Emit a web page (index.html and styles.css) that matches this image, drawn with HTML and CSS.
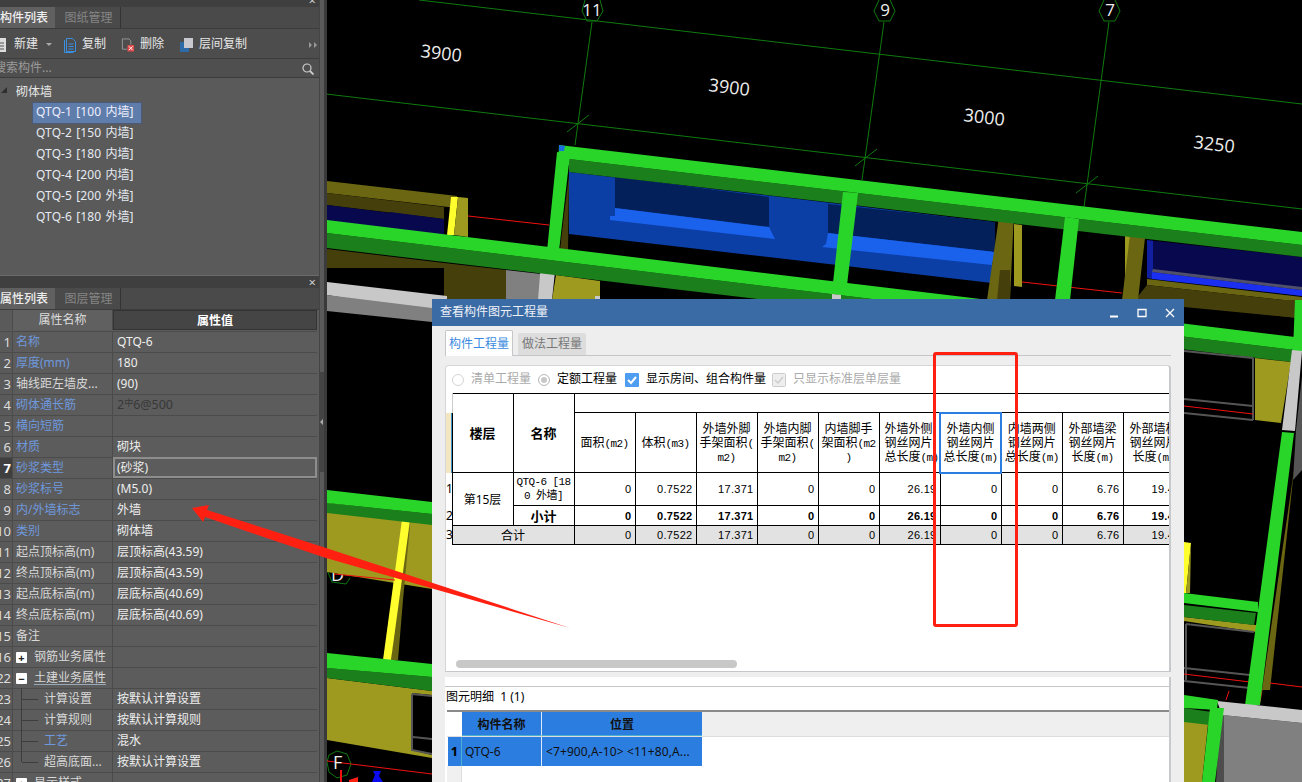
FILE: index.html
```html
<!DOCTYPE html>
<html lang="zh">
<head>
<meta charset="utf-8">
<title>查看构件图元工程量</title>
<link rel="stylesheet" href="styles.css">
</head>
<body>
<div class="app">
  <aside class="sidebar">
    <section class="panel panel-top">
      <div class="dock-title"><span class="dock-x">×</span></div>
      <div class="tabs"><span class="tab on">构件列表</span><span class="tab">图纸管理</span></div>
      <div class="toolbar">
        <span class="tool tool-new">
          <svg class="ico" viewBox="0 0 14 16"><path class="i-w" d="M0 1h12v14H0z"/><path class="i-d" d="M2 6h8M2 9h8M2 12h8"/></svg>
          新建<i class="caret"></i></span>
        <span class="tool tool-copy">
          <svg class="ico" viewBox="0 0 14 16"><path class="i-b" d="M3.500 1.500h6l3 3v10h-9zM1.500 3v12.500h9M5.500 7h5M5.500 9.500h5M5.500 12h5"/></svg>
          复制</span>
        <span class="tool tool-del">
          <svg class="ico" viewBox="0 0 15 16"><path class="i-g" d="M1.500 1.500h7l2 2v4M1.500 1.500v11h5"/><path class="i-r" d="M7 8h7v7H7z"/><path class="i-x" d="M8.500 9.500l4 4M12.500 9.500l-4 4"/></svg>
          删除</span>
        <span class="tool tool-layer">
          <svg class="ico" viewBox="0 0 14 16"><path class="i-f1" d="M0 5h9v10H0z"/><path class="i-f2" d="M4 1h9v10H4z"/></svg>
          层间复制</span>
        <span class="more">
          <svg viewBox="0 0 8 6"><path class="i-m" d="M0 0l3 3-3 3zM5 0l3 3-3 3z"/></svg>
        </span>
      </div>
      <div class="search"><span class="search-text">搜索构件...</span>
        <svg class="search-ico" viewBox="0 0 12 12"><circle class="i-s" cx="5" cy="5" r="4"/><path class="i-s2" d="M8 8l3.500 3.500"/></svg>
      </div>
      <div class="tree">
        <div class="tree-root"><i class="tri"></i>砌体墙</div>
        <div class="tree-item sel">QTQ-1 [100 内墙]</div>
        <div class="tree-item">QTQ-2 [150 内墙]</div>
        <div class="tree-item">QTQ-3 [180 内墙]</div>
        <div class="tree-item">QTQ-4 [200 内墙]</div>
        <div class="tree-item">QTQ-5 [200 外墙]</div>
        <div class="tree-item">QTQ-6 [180 外墙]</div>
      </div>
    </section>
    <section class="panel panel-bottom">
      <div class="dock-title dock-2"><span class="dock-x">×</span></div>
      <div class="tabs"><span class="tab on">属性列表</span><span class="tab">图层管理</span></div>
      <div class="props">
        <div class="prow phead"><span class="pn"></span><span class="pk">属性名称</span><span class="pv">属性值</span></div>
        <div class="prow"><span class="pn">1</span><span class="pk link">名称</span><span class="pv">QTQ-6</span></div>
        <div class="prow"><span class="pn">2</span><span class="pk link">厚度(mm)</span><span class="pv">180</span></div>
        <div class="prow"><span class="pn">3</span><span class="pk">轴线距左墙皮...</span><span class="pv">(90)</span></div>
        <div class="prow"><span class="pn">4</span><span class="pk link">砌体通长筋</span><span class="pv dim">2<sup class="rebar">中</sup>6@500</span></div>
        <div class="prow"><span class="pn">5</span><span class="pk link">横向短筋</span><span class="pv"></span></div>
        <div class="prow"><span class="pn">6</span><span class="pk link">材质</span><span class="pv">砌块</span></div>
        <div class="prow"><span class="pn cur">7</span><span class="pk link">砂浆类型</span><span class="pv focus">(砂浆)</span></div>
        <div class="prow"><span class="pn">8</span><span class="pk link">砂浆标号</span><span class="pv">(M5.0)</span></div>
        <div class="prow"><span class="pn">9</span><span class="pk link">内/外墙标志</span><span class="pv">外墙</span></div>
        <div class="prow"><span class="pn">10</span><span class="pk link">类别</span><span class="pv">砌体墙</span></div>
        <div class="prow"><span class="pn">11</span><span class="pk">起点顶标高(m)</span><span class="pv">层顶标高(43.59)</span></div>
        <div class="prow"><span class="pn">12</span><span class="pk">终点顶标高(m)</span><span class="pv">层顶标高(43.59)</span></div>
        <div class="prow"><span class="pn">13</span><span class="pk">起点底标高(m)</span><span class="pv">层底标高(40.69)</span></div>
        <div class="prow"><span class="pn">14</span><span class="pk">终点底标高(m)</span><span class="pv">层底标高(40.69)</span></div>
        <div class="prow"><span class="pn">15</span><span class="pk">备注</span><span class="pv"></span></div>
        <div class="prow"><span class="pn">16</span><span class="pk"><i class="box">+</i>钢筋业务属性</span><span class="pv"></span></div>
        <div class="prow"><span class="pn">22</span><span class="pk"><i class="box">−</i><u class="ul">土建业务属性</u></span><span class="pv"></span></div>
        <div class="prow"><span class="pn">23</span><span class="pk sub">计算设置</span><span class="pv">按默认计算设置</span></div>
        <div class="prow"><span class="pn">24</span><span class="pk sub">计算规则</span><span class="pv">按默认计算规则</span></div>
        <div class="prow"><span class="pn">25</span><span class="pk sub link">工艺</span><span class="pv">混水</span></div>
        <div class="prow"><span class="pn">26</span><span class="pk sub last">超高底面...</span><span class="pv">按默认计算设置</span></div>
        <div class="prow"><span class="pn">27</span><span class="pk"><i class="box">+</i>显示样式</span><span class="pv"></span></div>
      </div>
    </section>
  </aside>
  <div class="splitter"><span class="split-grip"><i class="split-tri"></i></span></div>

  <main class="view">
    <svg class="scene" viewBox="327 0 975 782" width="975" height="782">
      <!-- grid lines -->
      <g class="ln-g">
        <path d="M419 0L1302 104M326 94L1302 209"/>
        <path d="M592 22L575 145M884 22L862 180M1109 22L1084 207"/>
        <path d="M567 132L589 115M855 166L877 149M1076 193L1098 176"/>
        <path d="M585 0L582 11L587 21L597 21L603 11L600 0M879 0L874 11L879 21L890 21L895 11L890 0M1104 0L1099 11L1104 21L1115 21L1120 11L1115 0"/>
        <path d="M331 206L338 211L347 208M331 226L337 219L345 221M327 570L332 582L346 584L350 578"/>
        <path d="M329 755L337 751L347 754L351 764L347 775L337 778L329 772L327 762Z"/>
      </g>
      <g class="lbl"><text x="331" y="581" class="l">D</text></g>
      <!-- top-left block -->
      <polygon class="ol2" points="327,181 457,196 457,208 327,193"/>
      <polygon class="ol3" points="327,193 444,207 444,219 327,205"/>
      <polygon class="nv" points="327,205 390,213 390,234 327,222"/>
      <polygon class="nv" points="390,212 444,219 444,238 390,233"/>
      <polygon class="yl" points="451,197 458,197 454,235 447,235"/>
      <polygon class="ol" points="458,197 468,198 468,237 454,235"/>
      <polygon class="ol3" points="327,249 444,263 444,300 506,300 506,279 444,268 327,268"/>
      <polygon class="ol3" points="444,263 506,270 506,300 444,300"/>
      <polygon class="gy" points="506,270 541,274 541,300 506,300"/>
      <polygon class="lg" points="327,282 447,296 447,310 432,312 327,295"/>
      <polygon class="gy" points="327,295 432,308 432,322 327,311"/>
      <polygon class="lg" points="541,262 556,262 552,300 538,300"/>
      <polygon class="ol" points="556,275 600,281 600,300 552,300"/>
      <polygon class="lg" points="595,296 600,296 600,300 595,300"/>
      <path class="ln-r" d="M468 216L549 225"/>
      <!-- blue wall -->
      <polygon class="bl" points="569,172 992,222 992,283 569,234"/>
      <polygon class="dk" points="615,177 769,197 769,227 615,208"/>
      <polygon class="dk" points="828,204 995,222 995,252 828,233"/>
      <polygon class="bl2" points="615,208 769,227 775,239 610,220 610,216 615,216"/>
      <polygon class="bl2" points="828,233 995,252 992,265 822,247 826,244"/>
      <!-- right parts -->
      <polygon class="ol" points="1014,224 1022,225 1022,287 1014,286"/>
      <polygon class="ol2" points="1000,210 1014,212 1010,300 987,300"/>
      <polygon class="ol3" points="1000,270 1010,270 1010,300 997,300"/>
      <polygon class="ol" points="1125,234 1132,235 1130,280 1125,280"/>
      <polygon class="nv" points="1147,240 1302,257 1302,296 1147,278"/>
      <polygon class="bl3" points="1147,240 1153,241 1153,279 1147,278"/>
      <polygon class="bl4" points="1152,272 1302,290 1302,296 1152,279"/>
      <polygon class="gy2" points="1153,269 1302,287 1302,290 1152,272"/>
      <polygon class="ol2" points="1147,279 1302,297 1302,302 1147,285"/>
      <polygon class="ol3" points="1147,285 1302,302 1298,318 1135,300"/>
      <polygon class="ol3" points="1135,300 1298,300 1298,318 1184,307 1135,302"/>
      <polygon class="ol2" points="1131,227 1146,229 1138,300 1122,300"/>
      <path class="ln-r" d="M1022 282L1122 293"/>
      <path class="ln-gt" d="M1071 250L1066 300"/>
      <!-- top beam -->
      <polygon class="dg" points="569,159 1302,245 1302,257 569,172"/>
      <polygon class="gr" points="559,145 1302,232 1302,245 569,159 569,165 558,165"/>
      <polygon class="gr" points="557,152 570,154 559,251 547,251"/>
      <polygon class="ol3" points="564,215 569,175 568,250 560,250"/>
      <polygon class="blc" points="559,145 565,146 564,151 559,151"/>
      <polygon class="gr" points="843,192 858,193 847,285 833,283"/>
      <polygon class="gr" points="1065,217 1079,219 1070,300 1055,300"/>
      <!-- second beam -->
      <polygon class="dg" points="326,233 1295,350 1292,362 326,248"/>
      <polygon class="gr" points="326,220 1295,337 1295,350 326,233"/>
      <polygon class="lg" points="832,294 841,295 841,300 832,300"/>
      <!-- right-hand side -->
      <polygon class="ol" points="1255,358 1291,362 1281,423 1255,420"/>
      <path class="ln-f" d="M1253 358L1253 420M1184 351L1253 358M1184 399L1253 406M1184 413L1253 420"/>
      <path class="ln-r" d="M1184 406L1253 414"/>
      <polygon class="gy3" points="1302,376 1302,470 1293,480 1296,430"/>
      <polygon class="gr" points="1295,300 1302,300 1302,352 1293,352"/>
      <polygon class="lg" points="1292,350 1302,351 1295,431 1282,430"/>
      <polygon class="ol2" points="1294,470 1270,690 1262,690"/>
      <polygon class="yl" points="1184,542 1191,543 1186,593 1184,593"/>
      <polygon class="ol" points="1191,543 1190,593 1186,593"/>
      <polygon class="ol" points="1184,617 1256,625 1256,632 1184,621"/>
      <path class="ln-f" d="M1186 624L1254 632M1186 624L1186 680M1184 681L1250 688M1184 668L1250 675"/>
      <path class="ln-r" d="M1184 674L1250 682M1270 683L1302 687M1229 691L1226 700M1262 690L1260 702"/>
      <polygon class="dg" points="1184,605 1256,613 1254,625 1184,617"/>
      <polygon class="gr" points="1184,593 1258,602 1258,612 1184,603"/>
      <polygon class="gr" points="1282,432 1294,433 1260,705 1245,705 1256,625"/>
      <polygon class="gy" points="1222,715 1302,723 1302,782 1222,782"/>
      <polygon class="gy4" points="1220,715 1224,716 1224,782 1216,782"/>
      <polygon class="lg" points="1217,701 1302,710 1302,723 1222,715"/>
      <polygon class="ol" points="1184,720 1208,724 1202,782 1184,782"/>
      <polygon class="dg" points="1184,708 1212,712 1210,725 1184,722"/>
      <polygon class="gr" points="1184,695 1218,700 1217,710 1184,708"/>
      <polygon class="gr" points="1210,708 1224,708 1215,782 1202,782"/>
      <!-- lower-left -->
      <polygon class="ol" points="327,503 432,516 432,589 327,572"/>
      <polygon class="ol2" points="411,515 403,600 398,660 391,660 403,540"/>
      <polygon class="yl" points="403,512 411,513 391,660 383,660"/>
      <path class="ln-r" d="M334 574L395 580"/>
      <polygon class="dg" points="327,503 432,514 432,525 327,513"/>
      <polygon class="gr" points="327,490 432,502 432,514 327,503"/>
      <polygon class="ol" points="327,678 432,691 432,758 327,740"/>
      <polygon class="blk" points="412,693 432,695 432,755 412,750"/>
      <path class="ln-f" d="M412 694L432 696M412 694L412 750L432 754M413 737L432 739"/>
      <polygon class="dg" points="327,668 432,677 432,691 327,678"/>
      <polygon class="gr" points="327,653 432,664 432,677 327,668"/>
      <path class="ln-r" d="M327 761L432 774"/>
      <path class="ln-b" d="M341 770L341 782"/>
      <polygon class="arw" points="349,780 358,777 358,782 349,782"/>
      <polygon class="blu" points="372,782 375,775 373,771 381,771 379,776 383,782"/>
      <!-- labels -->
      <g class="lbl">
        <text x="592" y="16" class="n">11</text>
        <text x="885" y="16" class="n">9</text>
        <text x="1110" y="16" class="n">7</text>
        <text x="420" y="57" transform="rotate(7 420 57)">3900</text>
        <text x="708" y="91" transform="rotate(7 708 91)">3900</text>
        <text x="963" y="121" transform="rotate(7 963 121)">3000</text>
        <text x="1193" y="148" transform="rotate(7 1193 148)">3250</text>
        <text x="333" y="769" class="l">F</text>
      </g>
    </svg>

    <div class="dialog">
      <header class="dlg-title"><span>查看构件图元工程量</span>
        <span class="dlg-btns">
          <svg viewBox="0 0 10 10"><path class="w-s" d="M1 8.500h8"/></svg>
          <svg viewBox="0 0 10 10"><path class="w-t" d="M1 1.500h8v7H1z"/></svg>
          <svg viewBox="0 0 10 10"><path class="w-t" d="M1 1l8 8M9 1l-8 8"/></svg>
        </span>
      </header>
      <div class="dlg-body">
        <div class="dlg-tabs"><span class="dt on">构件工程量</span><span class="dt">做法工程量</span></div>
        <div class="dlg-gap"></div>
        <div class="qty">
          <div class="opts">
            <i class="radio"></i><span class="off o1">清单工程量</span>
            <i class="radio chk"></i><span class="o2">定额工程量</span>
            <svg class="cb" viewBox="0 0 14 14"><rect class="cb-b" width="14" height="14" rx="1"/><path class="cb-w" d="M3 7l3 3 5-6"/></svg><span class="o3">显示房间、组合构件量</span>
            <svg class="cb cb-off" viewBox="0 0 14 14"><rect class="cb-g" x=".5" y=".5" width="13" height="13" rx="1"/><path class="cb-c" d="M3 7l3 3 5-6"/></svg><span class="off o4">只显示标准层单层量</span>
          </div>
          <div class="sheet">
            <table class="qt">
              <colgroup><col class="c0"><col class="c1"><col class="c1"><col class="c1"><col class="c1"><col class="c1"><col class="c1"><col class="c1"><col class="c1"><col class="c1"><col class="c1"><col class="c1"><col class="c1"></colgroup>
              <tr class="r-g"><th class="rh blank"></th><th rowspan="2" class="big">楼层</th><th rowspan="2" class="big">名称</th><th colspan="10" class="grp"></th></tr>
              <tr class="r-h"><th class="rh mark"></th>
                <th>面积<span class="u">(m2)</span></th><th>体积<span class="u">(m3)</span></th>
                <th>外墙外脚<br>手架面积<span class="u">(</span><br><span class="u">m2)</span></th>
                <th>外墙内脚<br>手架面积<span class="u">(</span><br><span class="u">m2)</span></th>
                <th>内墙脚手<br>架面积<span class="u">(m2</span><br><span class="u">)</span></th>
                <th class="l-ov">外墙外侧<br>钢丝网片<br>总长度<span class="u">(m)</span></th>
                <th class="picked">外墙内侧<br>钢丝网片<br>总长度<span class="u">(m)</span></th>
                <th>内墙两侧<br>钢丝网片<br>总长度<span class="u">(m)</span></th>
                <th>外部墙梁<br>钢丝网片<br>长度<span class="u">(m)</span></th>
                <th>外部墙柱<br>钢丝网片<br>长度<span class="u">(m)</span></th></tr>
              <tr class="r-1"><td class="rh">1</td><td rowspan="2" class="cn">第15层</td><td class="nm">QTQ-6 [18<br>0 外墙]</td>
                <td>0</td><td>0.7522</td><td>17.371</td><td>0</td><td>0</td><td>26.19</td><td>0</td><td>0</td><td>6.76</td><td>19.49</td></tr>
              <tr class="r-2"><td class="rh">2</td><td class="sum">小计</td>
                <td>0</td><td>0.7522</td><td>17.371</td><td>0</td><td>0</td><td>26.19</td><td>0</td><td>0</td><td>6.76</td><td>19.49</td></tr>
              <tr class="r-3"><td class="rh">3</td><td colspan="2" class="cn">合计</td>
                <td>0</td><td>0.7522</td><td>17.371</td><td>0</td><td>0</td><td>26.19</td><td>0</td><td>0</td><td>6.76</td><td>19.49</td></tr>
            </table>
          </div>
          <div class="hbar"><i class="thumb"></i></div>
        </div>
        <div class="detail">
          <div class="det-title">图元明细&nbsp; 1 (1)</div>
          <div class="det-grid">
            <div class="dg-head"><span class="dg-c0"></span><span class="dg-c1">构件名称</span><span class="dg-c2">位置</span></div>
            <div class="dg-row"><span class="dg-c0">1</span><span class="dg-c1">QTQ-6</span><span class="dg-c2">&lt;7+900,A-10&gt; &lt;11+80,A...</span></div>
            <div class="dg-rest"></div>
          </div>
        </div>
      </div>
    </div>
  </main>

  <div class="mark-rect"></div>
  <svg class="mark-arrow" viewBox="0 0 1302 782" width="1302" height="782"><polygon class="arw" points="192,508 209,505 207,510 270,530 326,548 570,628 326,558 243,530 205,517 203,522"/></svg>
</div>
</body>
</html>
```
FILE: styles.css
```css
* { box-sizing: border-box; }
html, body { margin: 0; height: 100%; overflow: hidden; background: #000; }
body { font: 12px/1.2 "Noto Sans", "Noto Sans CJK SC", sans-serif; color: #e8e8e8; }
.app { position: relative; display: flex; width: 1302px; height: 782px; overflow: hidden; }
i, u { font-style: normal; }

/* sidebar */
.sidebar { width: 319px; flex: none; display: flex; flex-direction: column; overflow: hidden; background: #5a5a5a; }
.panel { display: flex; flex-direction: column; }
.panel-top { height: 276px; flex: none; border-bottom: 1px solid #6a6a6a; }
.panel-bottom { flex: 1; min-height: 0; }
.dock-title { height: 7px; background: #3f3f3f; position: relative; flex: none; overflow: hidden; }
.dock-2 { height: 12px; }
.dock-x { position: absolute; right: 3px; top: -7px; font-size: 13px; color: #ccc; line-height: 14px; }
.dock-2 .dock-x { top: -1px; }
.tabs { display: flex; height: 22px; flex: none; background: #4a4a4a; border-bottom: 1px solid #3c3c3c; }
.tab { width: 66px; line-height: 22px; text-align: center; color: #858585; font-size: 12px; border-right: 1px solid #333; padding-left: 2px; white-space: nowrap; }
.tab.on { width: 55px; background: #606060; color: #eee; padding: 0 0 0 0; text-align: left; font-weight: 500; border-right: 0; }
.toolbar { height: 30px; flex: none; display: flex; align-items: center; padding-top: 2px; background: #4d4d4d; border-bottom: 1px solid #3c3c3c; position: relative; }
.tool { display: flex; align-items: center; gap: 6px; color: #e8e8e8; flex: none; }
.tool .ico { width: 14px; height: 16px; flex: none; }
.tool-new { margin-left: -6px; width: 69px; }
.tool-copy { width: 58px; gap: 5px; }
.tool-del { width: 59px; gap: 5px; }
.tool-layer { gap: 5px; }
.caret { width: 0; height: 0; border: 3px solid transparent; border-top: 3px solid #aaa; border-bottom: 0; margin-left: 2px; }
.more { margin-left: auto; width: 8px; height: 6px; margin-right: 2px; display: flex; }
.more svg { width: 8px; height: 6px; }
.i-w { fill: #ddd; } .i-d { stroke: #555; fill: none; }
.i-b { stroke: #3b8fe0; fill: none; }
.i-g { stroke: #999; fill: none; } .i-r { fill: #e04a4a; } .i-x { stroke: #fff; fill: none; }
.i-f1 { fill: #2c6aa8; } .i-f2 { fill: #c8c8d0; } .i-m { fill: #999; }
.search { height: 19px; flex: none; padding-top: 1px; background: #4f4f4f; border-bottom: 1px solid #3c3c3c; display: flex; align-items: center; justify-content: space-between; padding-right: 5px; }
.search-text { color: #9a9a9a; margin-left: -6px; }
.search-ico { width: 12px; height: 12px; }
.i-s { fill: none; stroke: #ccc; stroke-width: 1.2; } .i-s2 { stroke: #ccc; stroke-width: 1.8; }
.tree { flex: 1; padding-top: 2px; background: #5a5a5a; }
.tree-root { height: 21px; line-height: 23px; padding-left: 16px; position: relative; }
.tri { position: absolute; left: 1px; top: 7px; width: 0; height: 0; border-left: 6px solid transparent; border-bottom: 6px solid #2e2e2e; }
.tree-item { height: 21px; line-height: 21px; padding-left: 36px; letter-spacing: .1px; word-spacing: 1px; color: #e6eaf2; position: relative; }
.tree-item.sel { color: #eef; isolation: isolate; }
.tree-item.sel::before { content: ""; position: absolute; left: 32px; top: 1px; width: 108px; height: 20px; background: #5f7dab; border: 1px solid #4a5a78; z-index: -1; }

/* property grid */
.props { flex: 1; background: #5c5c5c; }
.prow { display: flex; height: 21px; border-bottom: 1px solid #4b4b4b; margin-right: 2px; }
.pn { width: 13px; flex: none; display: flex; justify-content: flex-end; padding-right: 1px; overflow: hidden; line-height: 21px; background: #5a5a5a; border-right: 1px solid #4b4b4b; color: #ddd; white-space: nowrap; font-size: 13px; }
.pn.cur { background: #3f3f3f; color: #fff; font-weight: 700; }
.pk { width: 100px; flex: none; padding-left: 3px; line-height: 20px; border-right: 1px solid #4b4b4b; color: #d8d8d8; white-space: nowrap; display: flex; align-items: center; }
.pk.link { color: #6f98dc; }
.pk.sub { padding-left: 31px; position: relative; }
.pk.sub::before { content: ""; position: absolute; left: 8px; top: -1px; bottom: -1px; border-left: 1px solid #3d3d3d; }
.pk.sub::after { content: ""; position: absolute; left: 9px; top: 10px; width: 16px; border-top: 1px solid #3d3d3d; }
.pk.sub.last::before { bottom: 10px; }
.pv { flex: 1; padding-left: 4px; line-height: 20px; color: #eee; white-space: nowrap; }
.pv.dim { color: #383838; font-size: 12.500px; }
.pv.focus { border: 2px solid #8d8d8d; padding-left: 2px; line-height: 18px; margin: -1px 0 0; height: 21px; }
.rebar { font-size: 9px; vertical-align: 3px; line-height: 0; }
.phead { height: 22px; padding-bottom: 1px; }
.phead .pn { background: #5a5a5a; }
.phead .pk { background: #606060; justify-content: center; padding: 0; color: #ddd; }
.phead .pv { background: #454545; text-align: center; font-weight: 700; color: #fff; border: 1px solid #333; padding: 0; }
.box { width: 11px; height: 11px; background: #fff; color: #222; border-radius: 1px; display: inline-flex; align-items: center; justify-content: center; margin-right: 7px; font-weight: 700; font-size: 11px; line-height: 11px; flex: none; }
.ul { text-decoration: underline; text-decoration-color: #9ab; text-underline-offset: 2px; }

/* splitter */
.splitter { width: 8px; flex: none; background: #5a5a5a; border-left: 1px solid #444; border-right: 3px solid #3a3a3a; display: flex; align-items: center; }
.split-grip { width: 4px; height: 100px; background: #444; margin-top: 62px; display: flex; align-items: center; }
.split-tri { width: 0; height: 0; border: 3px solid transparent; border-right: 3px solid #aaa; border-left: 0; }

/* canvas */
.view { position: relative; flex: 1; background: #000; overflow: hidden; }
.scene { display: block; }
.ln-g path { fill: none; stroke: #0f7a0f; stroke-width: 1; }
.gr { fill: #2ad52a; } .dg { fill: #1b801b; } .ol { fill: #9d9a1f; } .ol2 { fill: #6b6612; } .ol3 { fill: #453f0c; }
.bl { fill: #0c3fa6; } .bl2 { fill: #1a62ec; } .bl3 { fill: #1120a0; } .bl4 { fill: #1a2ff0; } .dk { fill: #04205a; }
.nv { fill: #08084f; } .yl { fill: #ffff2e; } .gy { fill: #808080; } .gy2 { fill: #50506a; } .gy3 { fill: #555; } .gy4 { fill: #4d4d4d; }
.lg { fill: #c8c8c8; } .blc { fill: #1a6fe0; } .blk { fill: #000; } .blu { fill: #0b0bf0; } .arw { fill: #ff2012; }
.ln-r { fill: none; stroke: #f01010; } .ln-b { fill: none; stroke: #f01010; stroke-width: 2; }
.ln-f { fill: none; stroke: #555; stroke-width: 2; } .ln-gt { fill: none; stroke: #0f7a0f; }
.lbl text { fill: #eee; font: 18px "Open Sans", sans-serif; }
.lbl .n { text-anchor: middle; font-size: 17px; }
.lbl .l { font-size: 18px; }

/* dialog */
.dialog { position: absolute; left: 105px; top: 299px; width: 752px; height: 483px; background: #eeeeee; display: flex; flex-direction: column; color: #000; }
.dlg-title { height: 27px; flex: none; background: #3b6ba5; color: #eef2f8; display: flex; align-items: center; justify-content: space-between; padding: 0 9px 0 8px; }
.dlg-btns { display: flex; gap: 18px; }
.dlg-btns svg { width: 10px; height: 10px; display: block; }
.w-s { stroke: #fff; stroke-width: 2; fill: none; } .w-t { stroke: #fff; stroke-width: 1.300; fill: none; }
.dlg-body { flex: 1; min-height: 0; padding: 4px 13px 0; display: flex; flex-direction: column; }
.dlg-tabs { display: flex; height: 26px; flex: none; gap: 5px; align-items: flex-end; border-bottom: 1px solid #c6c6ca; }
.dt { width: 68px; height: 22px; line-height: 22px; text-align: center; background: #ddd; color: #777; border-radius: 2px 2px 0 0; }
.dt.on { height: 26px; line-height: 26px; background: #fff; color: #3a8ae0; border: 1px solid #c6c6ca; border-bottom: 0; margin-bottom: -1px; }
.dlg-gap { height: 9px; flex: none; }
.qty { height: 307px; flex: none; background: #fff; border: 1px solid #d6d6d6; border-right: 2px solid #c6cacc; border-radius: 4px 4px 0 0; border-bottom: 1px solid #c6c6ca; display: flex; flex-direction: column; position: relative; }
.opts { height: 27px; flex: none; display: flex; align-items: center; color: #000; }
.off { color: #aaa; }
.radio { width: 12px; height: 12px; border-radius: 50%; border: 1px solid #d4d4d4; background: #fff; flex: none; margin-left: 6px; }
.radio.chk { margin-left: 7px; box-shadow: inset 0 0 0 2px #fff, inset 0 0 0 6px #c8c8c8; border-color: #bbb; }
.o1 { margin-left: 7px; } .o2 { margin-left: 7px; }
.cb { width: 14px; height: 14px; flex: none; margin-left: 8px; }
.cb-off { margin-left: 6px; }
.cb-b { fill: #4f9df0; } .cb-w { stroke: #fff; stroke-width: 2; fill: none; }
.cb-g { fill: #eee; stroke: #ccc; } .cb-c { stroke: #ccc; stroke-width: 1.500; fill: none; }
.o3 { margin-left: 7px; } .o4 { margin-left: 7px; }
.sheet { flex: 1; min-height: 0; overflow: hidden; }
.qt { border-collapse: collapse; table-layout: fixed; width: 738px; }
.c0 { width: 6px; } .c1 { width: 61px; }
.qt th, .qt td { border: 1px solid #000; padding: 0; overflow: hidden; white-space: nowrap; }
.qt th { font-weight: 400; font-size: 12px; line-height: 14px; text-align: center; }
.qt .rh { border: 0; border-right: 1px solid #000; font: 12px/1 "Noto Sans", sans-serif; }
.qt .blank { border-right-color: #ccc; }
.qt .mark { background: linear-gradient(90deg, #f3e6c0 0 5px, #3a96cc 5px); }
.big { font-weight: 700 !important; font-size: 13px !important; }
.grp { border-bottom: 1px solid #000; }
.r-g { height: 19px; } .r-h { height: 60px; }
.r-1 { height: 33px; } .r-2 { height: 19px; } .r-3 { height: 19px; }
.qt td { font: 11px "Liberation Sans", sans-serif; letter-spacing: .3px; text-align: right; padding-right: 3px; }
.qt .u { font: 11px "Liberation Mono", monospace; letter-spacing: -.6px; }
.qt .rh { letter-spacing: 0; text-align: left; padding: 0; }
.qt .cn { font: 12px "Noto Sans", "Noto Sans CJK SC", sans-serif; letter-spacing: 0; text-align: center; padding: 0; }
.qt .nm { font: 11px/14px "Liberation Mono", "Noto Sans CJK SC", monospace; letter-spacing: -.6px; text-align: center; padding: 0; }
.qt .sum { font: 700 13px "Noto Sans CJK SC", sans-serif; letter-spacing: 0; text-align: center; padding: 0; }
.r-2 td { font-weight: 700; }
.r-3 td { background: #e2e2e2; }
.r-3 .rh { background: #fff; }
.qt .picked { border: 2px solid #2b7de0; }
.qt .l-ov { text-align: left; padding-left: 5px; }
.hbar { height: 23px; flex: none; padding: 12px 10px 0; }
.thumb { display: block; width: 281px; height: 8px; background: #c8c8c8; border-radius: 4px; }
.detail { flex: 1; min-height: 0; background: #fff; border-right: 2px solid #c6cacc; margin-top: 5px; padding-top: 9px; display: flex; flex-direction: column; }
.det-title { height: 24px; flex: none; line-height: 19px; padding-left: 1px; border-top: 1px solid #c6c6ca; }
.det-grid { flex: 1; border-top: 2px solid #8a8a8a; margin-left: 2px; display: flex; flex-direction: column; }
.dg-head { height: 25px; display: flex; background: #efefef; border-bottom: 1px solid #ddd; flex: none; }
.dg-row { height: 29px; display: flex; flex: none; }
.dg-c0 { width: 15px; flex: none; background: #fff; }
.dg-row .dg-c0 { background: #2b7de0; font-weight: 700; text-align: center; line-height: 29px; font-size: 13px; border-left: 1px solid #fff; border-right: 1px solid #4ab0d0; }
.dg-c1 { width: 80px; flex: none; background: #2b7de0; border-right: 1px solid #dce8f8; color: #111; }
.dg-c2 { width: 160px; flex: none; background: #2b7de0; color: #111; overflow: hidden; white-space: nowrap; }
.dg-head .dg-c1, .dg-head .dg-c2 { text-align: center; line-height: 25px; font-weight: 700; border-bottom: 1px solid #4ab0d0; }
.dg-row .dg-c1 { line-height: 29px; padding-left: 3px; }
.dg-row .dg-c2 { line-height: 29px; padding-left: 4px; letter-spacing: .1px; }
.dg-rest { flex: 1; width: 15px; background: #f0f0f0; border-right: 1px solid #ddd; }

/* annotations */
.mark-rect { position: absolute; left: 933px; top: 352px; width: 85px; height: 275px; border: 3px solid #ff2012; border-radius: 3px; pointer-events: none; }
.mark-arrow { position: absolute; left: 0; top: 0; pointer-events: none; }
```
